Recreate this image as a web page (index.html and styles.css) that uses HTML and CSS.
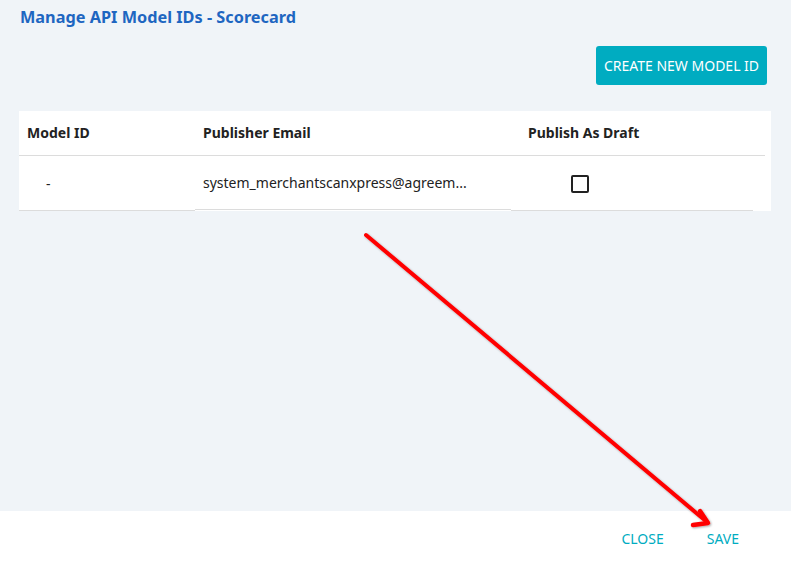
FILE: index.html
```html
<!DOCTYPE html>
<html>
<head>
<meta charset="utf-8">
<link rel="stylesheet" href="styles.css">
</head>
<body>
<div class="dialog">
  <div class="content">
    <h1 class="title">Manage API Model IDs - Scorecard</h1>
    <div class="toolbar">
      <button class="btn-primary">CREATE NEW MODEL ID</button>
    </div>
    <div class="card">
      <div class="row head">
        <div class="cell c1">Model ID</div>
        <div class="cell c2">Publisher Email</div>
        <div class="cell c3">Publish As Draft</div>
      </div>
      <div class="row body">
        <div class="cell c1 dash">-</div>
        <div class="cell c2 email">system_merchantscanxpress@agreem...</div>
        <div class="cell c3"><span class="checkbox"></span></div>
      </div>
    </div>
  </div>
  <div class="footer">
    <button class="btn-text">CLOSE</button>
    <button class="btn-text">SAVE</button>
  </div>
  <svg class="arrow" width="791" height="561" viewBox="0 0 791 561">
    <defs>
      <filter id="sh" x="-20%" y="-20%" width="140%" height="140%">
        <feDropShadow dx="1" dy="1" stdDeviation="1" flood-color="#000" flood-opacity="0.35"/>
      </filter>
    </defs>
    <g filter="url(#sh)" stroke="#ff0000" stroke-width="4" stroke-linecap="round" stroke-linejoin="round" fill="none">
      <line x1="366" y1="235" x2="707" y2="522"/>
      <polyline points="700,511 708,523 693,525" stroke-width="4.5"/>
    </g>
  </svg>
</div>
</body>
</html>
```
FILE: styles.css
```css
html, body {
  margin: 0;
  padding: 0;
}
body {
  font-family: "Noto Sans", "Open Sans", sans-serif;
  width: 791px;
  height: 561px;
  overflow: hidden;
}
.dialog {
  position: relative;
  width: 791px;
  height: 561px;
  display: flex;
  flex-direction: column;
}
.content {
  height: 511px;
  background: #f0f4f8;
  padding: 6px 20px 0 19px;
  box-sizing: border-box;
}
.title {
  margin: 0 0 0 1px;
  font-size: 16.3px;
  line-height: 22px;
  font-weight: 700;
  color: #1e66c1;
}
.toolbar {
  display: flex;
  justify-content: flex-end;
  margin-top: 18px;
  padding-right: 4px;
}
.btn-primary {
  font-family: inherit;
  background: #00acc1;
  color: #fff;
  border: none;
  border-radius: 3px;
  width: 171px;
  height: 39px;
  font-size: 14px;
  padding: 0;
  letter-spacing: 0;
}
.card {
  margin-top: 26px;
  background: #fff;
  height: 100px;
}
.row {
  display: flex;
}
.cell {
  box-sizing: border-box;
  font-size: 14px;
  color: #222;
}
.head .cell {
  font-weight: 700;
  height: 45px;
  line-height: 44px;
  border-bottom: 1px solid #dcdcdc;
}
.head .c1 { width: 176px; padding-left: 8px; }
.head .c2 { width: 326px; padding-left: 8px; }
.head .c3 { width: 244px; padding-left: 7px; }
.body .cell {
  height: 55px;
  display: flex;
  align-items: center;
}
.body .c1 {
  width: 176px;
  padding-left: 27px;
  border-bottom: 1px solid #dcdcdc;
}
.body .c2 {
  width: 316px;
  padding-left: 8px;
  height: 54px;
  border-bottom: 1px solid #dcdcdc;
}
.body .c3 {
  width: 242px;
  padding-left: 60px;
  border-bottom: 1px solid #dcdcdc;
}
.checkbox {
  display: block;
  width: 18px;
  height: 18px;
  border: 2px solid #222;
  border-radius: 2px;
  box-sizing: border-box;
  margin-top: 1px;
}
.footer {
  flex: 1;
  background: #fff;
  display: flex;
  justify-content: flex-end;
  align-items: center;
  gap: 19px;
  padding: 4px 40px 0 0;
  box-sizing: border-box;
}
.btn-text {
  font-family: inherit;
  background: none;
  border: none;
  color: #00acc1;
  font-size: 14px;
  padding: 4px 12px;
}
.arrow {
  position: absolute;
  left: 0;
  top: 0;
  pointer-events: none;
}
```
